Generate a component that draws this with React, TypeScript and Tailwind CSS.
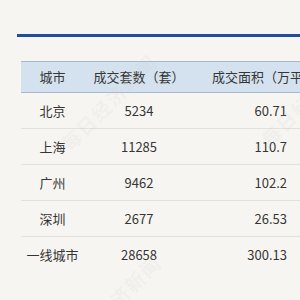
const rows = [
  { city: "北京", count: "5234", area: "60.71" },
  { city: "上海", count: "11285", area: "110.7" },
  { city: "广州", count: "9462", area: "102.2" },
  { city: "深圳", count: "2677", area: "26.53" },
  { city: "一线城市", count: "28658", area: "300.13" },
];

const marks = [
  { left: "left-[46px]", top: "top-[88px]" },
  { left: "left-[50px]", top: "top-[289px]" },
  { left: "left-[246px]", top: "top-[84px]" },
];

export default function App() {
  return (
    <div
      className="relative w-[300px] h-[300px] overflow-hidden bg-[#f7f5f2] pt-[34px] pl-[17px] text-[#353535]"
      style={{ fontFamily: '"Noto Sans CJK SC", "Noto Sans", sans-serif' }}
    >
      {/* title rule */}
      <div className="h-[3px] w-[300px] bg-[#1d4f9e]" />

      {/* table */}
      <div className="mt-[24px] ml-[4px] w-[340px] text-[13px]">
        <div className="grid grid-cols-[63px_110px_1fr] h-[32px] items-center bg-[#d4e2ef] border-y border-[#a9b9cc]">
          <div className="text-center">城市</div>
          <div className="text-center">成交套数（套）</div>
          <div className="pl-[18px] whitespace-nowrap">成交面积（万平方米）</div>
        </div>
        {rows.map((r, i) => (
          <div
            key={i}
            className={
              "grid grid-cols-[63px_110px_1fr] h-[36px] items-center " +
              (i < rows.length - 1 ? "border-b border-[#e4e1dc]" : "")
            }
          >
            <div className="text-center">{r.city}</div>
            <div className="text-center">{r.count}</div>
            <div className="w-[93px] text-right">{r.area}</div>
          </div>
        ))}
      </div>

      {/* watermarks */}
      {marks.map((m, i) => (
        <span
          key={i}
          className={
            "absolute " +
            m.left +
            " " +
            m.top +
            " -rotate-45 text-[19px] font-bold tracking-[2px] whitespace-nowrap text-[#c8c8c8]/15 pointer-events-none"
          }
        >
          每日经济新闻
        </span>
      ))}
    </div>
  );
}
